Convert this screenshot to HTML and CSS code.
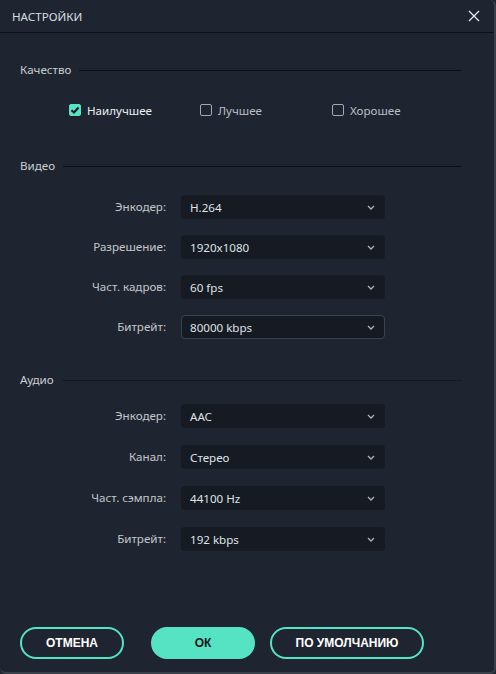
FILE: index.html
```html
<!DOCTYPE html>
<html lang="ru">
<head>
<meta charset="utf-8">
<title>Настройки</title>
<link rel="stylesheet" href="styles.css">
</head>
<body>
<div class="window">
  <div class="header">
    <span class="title">НАСТРОЙКИ</span>
    <svg class="close" width="12" height="12" viewBox="0 0 12 12"><path d="M1 1L11 11M11 1L1 11" stroke="#e2e5e9" stroke-width="1.4" fill="none"/></svg>
  </div>

  <div class="section-title sec-quality"><span>Качество</span><i class="line"></i></div>
  <div class="checks">
    <label class="check"><span class="box checked"><svg width="10" height="10" viewBox="0 0 10 10"><path d="M1.5 5.2L4 7.5L8.5 2.5" stroke="#10161d" stroke-width="2" fill="none"/></svg></span><span class="clabel on">Наилучшее</span></label>
    <label class="check w2"><span class="box"></span><span class="clabel">Лучшее</span></label>
    <label class="check"><span class="box"></span><span class="clabel">Хорошее</span></label>
  </div>

  <div class="section-title sec-video"><span>Видео</span><i class="line"></i></div>
  <div class="form video">
    <div class="lbl">Энкодер:</div><div class="select">H.264<svg class="chev" width="8" height="5" viewBox="0 0 8 5"><path d="M1 1L4 4L7 1" stroke="#aeb4bc" stroke-width="1.3" fill="none"/></svg></div>
    <div class="lbl">Разрешение:</div><div class="select">1920x1080<svg class="chev" width="8" height="5" viewBox="0 0 8 5"><path d="M1 1L4 4L7 1" stroke="#aeb4bc" stroke-width="1.3" fill="none"/></svg></div>
    <div class="lbl">Част. кадров:</div><div class="select">60 fps<svg class="chev" width="8" height="5" viewBox="0 0 8 5"><path d="M1 1L4 4L7 1" stroke="#aeb4bc" stroke-width="1.3" fill="none"/></svg></div>
    <div class="lbl">Битрейт:</div><div class="select focus">80000 kbps<svg class="chev" width="8" height="5" viewBox="0 0 8 5"><path d="M1 1L4 4L7 1" stroke="#aeb4bc" stroke-width="1.3" fill="none"/></svg></div>
  </div>

  <div class="section-title sec-audio"><span>Аудио</span><i class="line faint"></i></div>
  <div class="form audio">
    <div class="lbl">Энкодер:</div><div class="select">AAC<svg class="chev" width="8" height="5" viewBox="0 0 8 5"><path d="M1 1L4 4L7 1" stroke="#aeb4bc" stroke-width="1.3" fill="none"/></svg></div>
    <div class="lbl">Канал:</div><div class="select">Стерео<svg class="chev" width="8" height="5" viewBox="0 0 8 5"><path d="M1 1L4 4L7 1" stroke="#aeb4bc" stroke-width="1.3" fill="none"/></svg></div>
    <div class="lbl">Част. сэмпла:</div><div class="select">44100 Hz<svg class="chev" width="8" height="5" viewBox="0 0 8 5"><path d="M1 1L4 4L7 1" stroke="#aeb4bc" stroke-width="1.3" fill="none"/></svg></div>
    <div class="lbl">Битрейт:</div><div class="select">192 kbps<svg class="chev" width="8" height="5" viewBox="0 0 8 5"><path d="M1 1L4 4L7 1" stroke="#aeb4bc" stroke-width="1.3" fill="none"/></svg></div>
  </div>

  <div class="buttons">
    <button class="btn cancel">ОТМЕНА</button>
    <button class="btn ok">ОК</button>
    <button class="btn def">ПО УМОЛЧАНИЮ</button>
  </div>
</div>
</body>
</html>
```

FILE: styles.css
```css
* { box-sizing: border-box; }
html, body { margin: 0; padding: 0; background: #1f2530; }
body {
  font-family: "Noto Sans", "DejaVu Sans", sans-serif;
  font-size: 11.6px;
  color: #c9cdd3;
}
.window {
  width: 496px;
  height: 674px;
  background: #1f2530;
  border-right: 2px solid #3a4049;
  border-bottom: 2px solid #3a4049;
  border-radius: 6px;
  overflow: hidden;
}
.header {
  height: 33px;
  border-bottom: 1px solid #0c0f14;
  display: flex;
  align-items: center;
  justify-content: space-between;
  padding: 0 14px 0 12px;
}
.title { color: #d9dce1; font-size: 11.6px; }
.close { display: block; }

.section-title {
  display: flex;
  align-items: center;
  padding: 0 32px 0 20px;
  height: 16px;
  line-height: 16px;
  color: #c9cdd3;
}
.section-title .line {
  flex: 1;
  height: 1px;
  background: #0b0e13;
  margin-left: 8px;
  margin-top: 1px;
}
.section-title .line.faint { background: #151a21; }
.sec-quality { margin-top: 29px; }
.sec-video { margin-top: 40px; }
.sec-audio { margin-top: 33px; }

.checks {
  display: flex;
  align-items: center;
  padding-left: 69px;
  margin-top: 24px;
  height: 16px;
}
.check {
  display: flex;
  align-items: center;
  width: 131px;
}
.check.w2 { width: 132px; }
.box {
  width: 12px;
  height: 12px;
  border: 1px solid #a3a8b0;
  border-radius: 2px;
  display: flex;
  align-items: center;
  justify-content: center;
}
.box.checked { background: #55e3c4; border-color: #55e3c4; }
.clabel { margin-left: 6px; color: #b9bec5; }
.clabel.on { color: #ecf0f3; }

.form {
  display: grid;
  grid-template-columns: 146px 204px;
  column-gap: 15px;
  row-gap: 16px;
  padding-left: 20px;
  margin-top: 21px;
}
.form.audio { row-gap: 17px; margin-top: 16px; }
.lbl {
  text-align: right;
  line-height: 24px;
  color: #c3c7cd;
}
.select {
  height: 24px;
  background: #151a23;
  border-radius: 4px;
  display: flex;
  align-items: center;
  justify-content: space-between;
  padding: 0 10px 0 9px;
  color: #dfe2e6;
}
.select.focus { border: 1px solid #3c424b; padding-left: 8px; padding-right: 9px; }
.chev { display: block; }

.buttons {
  display: flex;
  align-items: center;
  padding-left: 20px;
  margin-top: 76px;
}
.btn {
  height: 32px;
  border-radius: 16px;
  border: 2px solid #55e3c4;
  background: transparent;
  color: #ffffff;
  font-family: "Liberation Sans", Arial, sans-serif;
  font-weight: bold;
  font-size: 12px;
  padding: 0;
  cursor: pointer;
}
.cancel { width: 104px; }
.ok { width: 104px; margin-left: 27px; background: #55e3c4; color: #0f1419; }
.def { width: 154px; margin-left: 15px; }
```
